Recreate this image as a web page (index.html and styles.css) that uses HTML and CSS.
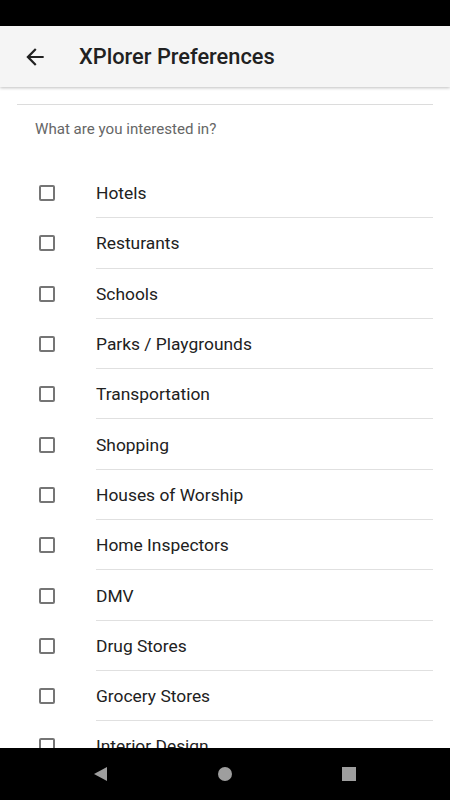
FILE: index.html
```html
<!DOCTYPE html>
<html lang="en">
<head>
    <meta charset="UTF-8">
    <meta name="viewport" content="width=device-width, initial-scale=1.0">
    <title>XPlorer Preferences</title>
    <link rel="stylesheet" href="styles.css">
</head>
<body>
    <div class="screen">
        <div class="status-bar"></div>

        <div class="app-bar">
            <svg class="back" viewBox="0 0 24 24" width="26" height="26">
                <path d="M20 11H7.83l5.59-5.59L12 4l-8 8 8 8 1.41-1.41L7.83 13H20v-2z" fill="#212121"/>
            </svg>
            <h1 class="title">XPlorer Preferences</h1>
        </div>

        <div class="content">
            <p class="intro">What are you interested in?</p>

            <ul class="list">
                <li class="item"><span class="check"></span><span class="label">Hotels</span></li>
                <li class="item"><span class="check"></span><span class="label">Resturants</span></li>
                <li class="item"><span class="check"></span><span class="label">Schools</span></li>
                <li class="item"><span class="check"></span><span class="label">Parks / Playgrounds</span></li>
                <li class="item"><span class="check"></span><span class="label">Transportation</span></li>
                <li class="item"><span class="check"></span><span class="label">Shopping</span></li>
                <li class="item"><span class="check"></span><span class="label">Houses of Worship</span></li>
                <li class="item"><span class="check"></span><span class="label">Home Inspectors</span></li>
                <li class="item"><span class="check"></span><span class="label">DMV</span></li>
                <li class="item"><span class="check"></span><span class="label">Drug Stores</span></li>
                <li class="item"><span class="check"></span><span class="label">Grocery Stores</span></li>
                <li class="item"><span class="check"></span><span class="label">Interior Design</span></li>
            </ul>
        </div>

        <div class="nav-bar">
            <span class="nav-back"></span>
            <span class="nav-home"></span>
            <span class="nav-recent"></span>
        </div>
    </div>
</body>
</html>
```

FILE: styles.css
```css
body {
    margin: 0;
    background: #fff;
    font-family: Roboto, "Noto Sans", sans-serif;
    color: #212121;
}
.screen {
    height: 800px;
    display: flex;
    flex-direction: column;
    overflow: hidden;
}
.status-bar {
    height: 26px;
    background: #000;
    flex: none;
}
.app-bar {
    height: 61px;
    flex: none;
    display: flex;
    align-items: center;
    background: #f5f5f5;
    box-shadow: 0 1px 3px rgba(0, 0, 0, 0.25);
    position: relative;
    z-index: 1;
}
.app-bar .back {
    margin-left: 22px;
}
.app-bar .title {
    margin: 0 0 0 31px;
    font-size: 21.8px;
    font-weight: 500;
    color: #212121;
}
.content {
    flex: 1;
    overflow: hidden;
    padding: 17px 17px 0;
}
.intro {
    margin: 0 0 29px;
    border-top: 1px solid #dcdcdc;
    padding: 14px 0 0 18px;
    font-size: 15.1px;
    line-height: 20px;
    color: #666;
}
.list {
    list-style: none;
    margin: 0;
    padding: 0;
}
.item {
    display: flex;
    align-items: center;
    height: 50.3px;
}
.item .check {
    flex: none;
    box-sizing: border-box;
    width: 16px;
    height: 16px;
    margin: 0 41px 0 22px;
    border: 2px solid #757575;
    border-radius: 2px;
}
.item .label {
    flex: 1;
    align-self: stretch;
    display: flex;
    align-items: center;
    padding-top: 1px;
    border-bottom: 1px solid #e0e0e0;
    font-size: 17.4px;
    color: #212121;
}
.nav-bar {
    height: 52px;
    flex: none;
    background: #000;
    display: flex;
    align-items: center;
    justify-content: space-between;
    padding: 0 94px;
}
.nav-back {
    width: 0;
    height: 0;
    border-top: 7.5px solid transparent;
    border-bottom: 7.5px solid transparent;
    border-right: 13px solid #9e9e9e;
}
.nav-home {
    width: 14px;
    height: 14px;
    border-radius: 50%;
    background: #9e9e9e;
}
.nav-recent {
    width: 14px;
    height: 14px;
    background: #9e9e9e;
}
```
